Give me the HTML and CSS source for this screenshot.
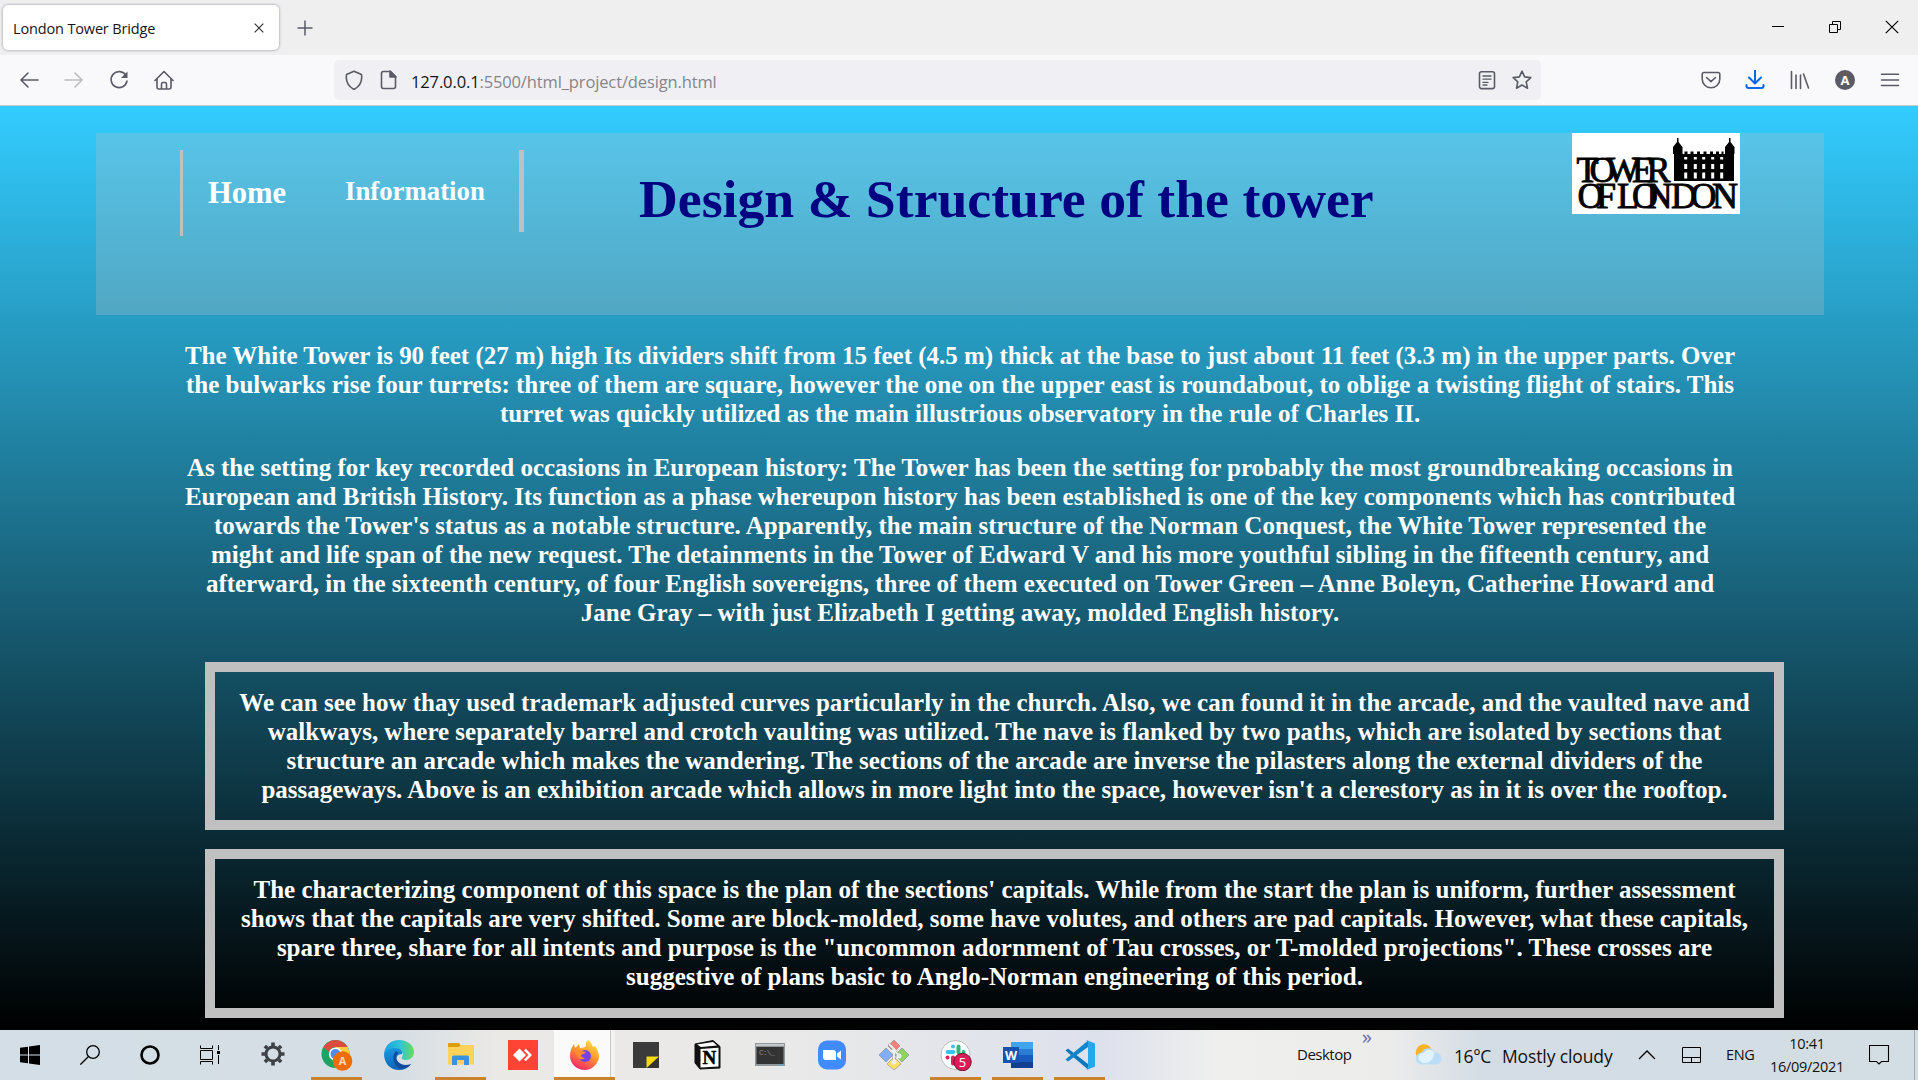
FILE: index.html
```html
<!DOCTYPE html>
<html lang="en">
<head>
<meta charset="utf-8">
<title>London Tower Bridge</title>
<link rel="stylesheet" href="styles.css">
</head>
<body>
<div class="tabbar">
  <div class="tab"><span class="tab-title">London Tower Bridge</span>
    <svg class="tab-close" width="10" height="10" viewBox="0 0 10 10"><path d="M.7.7l8.6 8.6M9.3.7L.7 9.3" stroke="#333" stroke-width="1.2"/></svg>
  </div>
  <svg class="newtab" width="16" height="16" viewBox="0 0 16 16"><path d="M8 .5v15M.5 8h15" stroke="#5b5b66" stroke-width="1.5"/></svg>
  <div class="winctl">
    <svg width="14" height="14" viewBox="0 0 14 14"><path d="M1 6.500h12" stroke="#000"/></svg>
    <svg width="14" height="14" viewBox="0 0 14 14" fill="none" stroke="#000"><path d="M1.500 4.500h8v8h-8zM4.500 4.500v-3h8v8h-3"/></svg>
    <svg width="14" height="14" viewBox="0 0 14 14"><path d="M.8.8l12.400 12.400M13.200.8L.8 13.200" stroke="#000" stroke-width="1.200"/></svg>
  </div>
</div>
<div class="toolbar">
  <div class="navicons">
    <svg viewBox="0 0 20 20"><path d="M19 10H2M9 3L2 10l7 7"/></svg>
    <svg class="dim" viewBox="0 0 20 20"><path d="M1 10h17M11 3l7 7-7 7"/></svg>
    <svg viewBox="0 0 20 20"><path d="M17 5.500A8 8 0 1 0 18 11"/><path d="M18.500 1.500v6.500h-6.500z" fill="#5b5b66" stroke="none"/></svg>
    <svg viewBox="0 0 20 20"><path d="M1 10.500l9-9 9 9M3 9v8q0 2 2 2h10q2 0 2-2V9M7.500 19v-5q0-1.500 1.500-1.500h2q1.500 0 1.500 1.500v5"/></svg>
  </div>
  <div class="urlbar">
    <svg viewBox="0 0 20 20"><path d="M10 1.200L17.500 4.500q1.500 10-7.500 15q-9-5-7.500-15z"/></svg>
    <svg class="page-icon" viewBox="0 0 20 20"><path d="M4.500 1.500h7l5 5v10q0 2-2 2h-10q-2 0-2-2v-13q0-2 2-2z"/><path d="M11 1v6h6z" fill="#5b5b66"/></svg>
    <span class="url"><b>127.0.0.1</b>:5500/html_project/design.html</span>
    <svg class="reader" viewBox="0 0 20 20"><rect x="2.500" y="1.800" width="15" height="16.800" rx="2"/><path d="M6 6h8M6 9.200h8M6 12.400h5M6 15h4" stroke-width="1.300"/></svg>
    <svg viewBox="0 0 20 20"><path d="M10 1.200l2.600 5.700 6.200.7-4.600 4.200 1.300 6.400L10 15l-5.500 3.200 1.300-6.400L1.200 7.600l6.200-.7z"/></svg>
  </div>
  <div class="tools">
    <svg class="pocket" viewBox="0 0 20 20"><path d="M3 2.500h14q1.800 0 1.800 1.800V9a8.800 8.800 0 0 1-17.600 0V4.300Q1.200 2.500 3 2.500zM5.500 7.500l4.500 4.200 4.500-4.200"/></svg>
    <svg class="blue" viewBox="0 0 20 20"><path d="M10 0v13M4 7.500l6 6 6-6M1.500 15v1q0 2 2 2h13q2 0 2-2v-1"/></svg>
    <svg class="library" viewBox="0 0 20 20"><path d="M1.500 1.500v17M6 5v13.500M10.500 5v13.500M13.500 4l5 14"/></svg>
    <span class="account">A</span>
    <svg viewBox="0 0 20 20"><path d="M1.500 4.200h17M1.500 10h17M1.500 15.500h17"/></svg>
  </div>
</div>

<main class="page">
  <header class="banner">
    <nav class="menu"><a class="home">Home</a><a class="info">Information</a></nav>
    <h1>Design &amp; Structure of the tower</h1>
    <svg class="logo" width="168" height="81" viewBox="0 0 168 81">
      <rect width="168" height="81" fill="#fff"/>
      <g font-family="Liberation Serif,serif" font-size="36" font-weight="400" stroke="#000" stroke-width=".9">
        <text y="49" x="4.500 17.500 34 60 74.500">TOWER</text>
        <text y="75" x="5.500 24">OF</text>
        <text y="75" x="45 60 74.500 99 118.500 140">LONDON</text>
      </g>
      <path d="M102 21h60v27h-60zM101 21v-7l4-5V5h1.500v4l4 5v7zM153 21v-7l4-5V5h1.500v4l4 5v7zM112.500 18.500h3v3h-3zM118.500 18.500h3v3h-3zM125 18.500h3v3h-3zM131.500 18.500h3v3h-3zM138 18.500h3v3h-3zM144 18.500h3v3h-3zM149.500 18.500h2v3h-2z"/>
      <path d="M113.700 24v2.500M123.300 24v2.500M131.700 24v2.500M140.700 24v2.500M149.700 24v2.500M113.700 31v5M123.300 31v5M131.700 31v5M140.700 31v5M149.700 31v5M113.700 39.500v6M123.300 39.500v6M131.700 39.500v6M140.700 39.500v6M149.700 39.500v6" stroke="#fff" stroke-width="3"/>
    </svg>
  </header>
  <p class="copy">The White Tower is 90 feet (27 m) high Its dividers shift from 15 feet (4.5 m) thick at the base to just about 11 feet (3.3 m) in the upper parts. Over<br>the bulwarks rise four turrets: three of them are square, however the one on the upper east is roundabout, to oblige a twisting flight of stairs. This<br>turret was quickly utilized as the main illustrious observatory in the rule of Charles II.</p>
  <p class="copy">As the setting for key recorded occasions in European history: The Tower has been the setting for probably the most groundbreaking occasions in<br>European and British History. Its function as a phase whereupon history has been established is one of the key components which has contributed<br>towards the Tower's status as a notable structure. Apparently, the main structure of the Norman Conquest, the White Tower represented the<br>might and life span of the new request. The detainments in the Tower of Edward V and his more youthful sibling in the fifteenth century, and<br>afterward, in the sixteenth century, of four English sovereigns, three of them executed on Tower Green – Anne Boleyn, Catherine Howard and<br>Jane Gray – with just Elizabeth I getting away, molded English history.</p>
  <section class="frame">We can see how thay used trademark adjusted curves particularly in the church. Also, we can found it in the arcade, and the vaulted nave and<br>walkways, where separately barrel and crotch vaulting was utilized. The nave is flanked by two paths, which are isolated by sections that<br>structure an arcade which makes the wandering. The sections of the arcade are inverse the pilasters along the external dividers of the<br>passageways. Above is an exhibition arcade which allows in more light into the space, however isn't a clerestory as in it is over the rooftop.</section>
  <section class="frame second">The characterizing component of this space is the plan of the sections' capitals. While from the start the plan is uniform, further assessment<br>shows that the capitals are very shifted. Some are block-molded, some have volutes, and others are pad capitals. However, what these capitals,<br>spare three, share for all intents and purpose is the "uncommon adornment of Tau crosses, or T-molded projections". These crosses are<br>suggestive of plans basic to Anglo-Norman engineering of this period.</section>
</main>

<footer class="taskbar">
  <div class="cell sys"><svg width="20" height="20" viewBox="0 0 20 20"><path d="M0 2.800l8-1.100V9.500H0zM9 1.500L20 0v9.500H9zM0 10.500h8v7.800l-8-1.100zM9 10.500h11V20L9 18.500z"/></svg></div>
  <div class="cell sys"><svg width="20" height="20" viewBox="0 0 20 20" fill="none" stroke="#000" stroke-width="1.300"><circle cx="13" cy="7" r="6.300"/><path d="M8.500 11.500L.4 19.600"/></svg></div>
  <div class="cell sys"><svg width="20" height="20" viewBox="0 0 20 20"><circle cx="10" cy="10" r="8.500" fill="none" stroke="#000" stroke-width="2.600"/></svg></div>
  <div class="cell sys"><svg width="20" height="20" viewBox="0 0 20 20" fill="none" stroke="#000"><path d="M.5.500v3h12v-3M.5 5.500h12v9H.5zM.5 19.500v-3h12v3M18.500 0v5M18.500 10v9"/><path d="M17 6h3v3h-3z" fill="#000" stroke="none"/></svg></div>
  <div class="cell gear"><svg width="24" height="24" viewBox="-12 -12 24 24" fill="none" stroke="#3d4145"><circle r="7" stroke-width="3"/><g stroke-width="3.600"><path d="M0-8v-3.500M0 8v3.500M-8 0h-3.500M8 0h3.500M5.800-5.800l2.300-2.300M-5.800-5.800l-2.300-2.300M5.800 5.800l2.300 2.300M-5.800 5.800l-2.300 2.300"/></g></svg></div>
  <div class="cell on"><svg viewBox="0 0 32 32"><circle cx="14.500" cy="15" r="14" fill="#1da462"/><path d="M2.400 8A14 14 0 0 1 26.600 8H14.500A7 7 0 0 0 8 13z" fill="#dd4b3e"/><path d="M14.500 8h12.100A14 14 0 0 1 14.500 29l6-10.500z" fill="#ffcd40"/><circle cx="14.500" cy="15" r="6.600" fill="#fff"/><circle cx="14.500" cy="15" r="5" fill="#4a8af4"/><circle cx="21.500" cy="22" r="9.800" fill="#ee6c0a"/><text x="21.500" y="26" text-anchor="middle" font-size="11" font-weight="bold" fill="#ffd9b5">A</text></svg></div>
  <div class="cell"><svg viewBox="0 0 32 32"><defs><linearGradient id="eg" x1="0" x2="1"><stop stop-color="#1d9fe0"/><stop offset=".55" stop-color="#31c5d6"/><stop offset="1" stop-color="#67dc55"/></linearGradient><linearGradient id="eb" y2="1" x2=".3"><stop stop-color="#1a9be3"/><stop offset="1" stop-color="#0a63b5"/></linearGradient></defs><path d="M1 15C2 6 8 1 16 1c9 0 15 6 15 12 0 5-4 8-8 8-3 0-5-1-4-3 2-3 0-7-5-7C8 11 3 13 1 15z" fill="url(#eg)"/><path d="M1 15c2-4 6-6 11-6 5 0 8 3 7 6-5 0-7 4-4 8 3 3 8 5 13 2-3 4-7 6-12 6C7 31 1 24 1 15z" fill="url(#eb)"/><path d="M13 12c-4 4-4 12 3 17 4 2 9 0 12-4-5 2-10 1-13-2-3-4-2-8 1-9z" fill="#134c9c"/></svg></div>
  <div class="cell on"><svg viewBox="0 0 32 32"><path d="M3 5q0-1 1-1h10l2 3-2 2H3z" fill="#df9c0b"/><path d="M3 8h11l2-2h13v19.500H3z" fill="#ffd35a"/><path d="M7 26v-8q0-1.500 1.500-1.500h14q1.500 0 1.500 1.500v8h-5v-5h-7v5z" fill="#3893dc"/></svg></div>
  <div class="cell"><svg viewBox="0 0 32 32"><path d="M1 1h30v30H1z" fill="#ff4335"/><path d="M6 16l6.500-6.500L19 16l-6.500 6.500zM17 11.500l1.800-1.800L25 16l-6.200 6.300-1.800-1.800L21.400 16z" fill="#fff"/></svg></div>
  <div class="cell on active"><svg viewBox="0 0 32 32"><defs><linearGradient id="ff" x1=".8" y1="0" x2=".3" y2="1"><stop stop-color="#ffe64a"/><stop offset=".45" stop-color="#ff9a2c"/><stop offset="1" stop-color="#f5236b"/></linearGradient></defs><path d="M19 1c4 3 4 5 5 7l2-1c4 5 5 11 3 15-3 6-8 9-13 9C7 31 1 24 1 17c0-4 1-8 4-12l1 4c2-2 3-3 4-4l1 4c3 0 5-1 6-2-1-2 0-4 2-6z" fill="url(#ff)"/><circle cx="16" cy="17" r="6" fill="#7543e5"/><path d="M6 12c3-2 7 0 11 1-1 2-4 2-5 3 0 2 2 3 4 3-3 3-8 1-10-7z" fill="#ff8b2f"/></svg></div>
  <div class="cell"><svg viewBox="0 0 32 32"><path d="M3 3h26v14L18 29H3z" fill="#3b3b3c"/><path d="M16 29V17h13v12z" fill="#333"/><path d="M16.500 29V17.500H29z" fill="#ffd90a"/></svg></div>
  <div class="cell"><svg viewBox="0 0 32 32"><path d="M3 5l18-3.500 7 6V29L8 30l-5-6z" fill="#111" stroke="#111"/><path d="M5 5.500L21 3l4 3.500L9 8zM8.500 10l18-1.200v18.700l-18 1z" fill="#fff"/><text x="10.500" y="25" font-family="Liberation Serif" font-weight="bold" font-size="19" stroke="#000" stroke-width=".5">N</text></svg></div>
  <div class="cell"><svg viewBox="0 0 32 32"><path d="M1 4h30v23H1z" fill="#92979b"/><path d="M2.500 8h27v17h-27z" fill="#333334"/><path d="M2 5h28v2H2z" fill="#c5c8ca"/><text x="5" y="16" font-family="Liberation Mono" font-size="8" letter-spacing="-1" fill="#888">C:\_</text><path d="M25 26h4" stroke="#38b5e8"/></svg></div>
  <div class="cell"><svg viewBox="0 0 32 32"><rect x="2" y="1.500" width="28" height="29" rx="9" fill="#428bff"/><path d="M7 11h10q3 0 3 3v7H10q-3 0-3-3zM21 14.500l4-3v9l-4-3z" fill="#fff"/></svg></div>
  <div class="cell"><svg viewBox="0 0 32 32"><g stroke="#858585" stroke-width=".6"><path d="M16 1l6 6-6 6-6-6z" fill="#ff7e78"/><path d="M8 9l7 7-7 7-7-7z" fill="#81aefa"/><path d="M24 9l7 7-7 7-7-7z" fill="#8bd65f"/><path d="M16 18l7 7-7 6-7-6z" fill="#ffdf65"/></g><path d="M11 5l5 5v14M16 12l5 4" fill="none" stroke="#999" stroke-width="3"/><path d="M11 5l5 5v14M16 12l5 4" fill="none" stroke="#eee" stroke-width="2"/><circle cx="16" cy="12" r="2.300" fill="#eee"/><circle cx="16" cy="23" r="2.500" fill="#eee"/><circle cx="21" cy="17" r="2.500" fill="#eee"/></svg></div>
  <div class="cell on"><svg viewBox="0 0 32 32"><circle cx="15.500" cy="16" r="14.500" fill="#fff" stroke="#bbb"/><g fill="none" stroke-width="4" stroke-linecap="round"><path d="M7.500 13h6M13 7.500v.1" stroke="#36c5f0"/><path d="M18.500 7.500v6M23.500 13v.1" stroke="#2eb67d"/><path d="M7.500 18.500v.1M13 18.500v6" stroke="#e01e5a"/><path d="M18.500 18.500h6" stroke="#ecb22e"/></g><circle cx="22.500" cy="23" r="8.700" fill="#df1b57" stroke="#6a1730"/><text x="22.500" y="27.500" text-anchor="middle" font-size="13" fill="#fff">5</text></svg></div>
  <div class="cell on"><svg viewBox="0 0 32 32"><path d="M9 3h22v7H9z" fill="#41a5ee"/><path d="M9 10h22v6H9z" fill="#2b7cd3"/><path d="M9 16h22v7H9z" fill="#185abd"/><path d="M9 23h22v6H9z" fill="#103f91"/><path d="M1 8h16v16H1z" fill="#1853b1"/><text x="9" y="20.500" text-anchor="middle" font-size="12.500" font-weight="bold" fill="#fff">W</text></svg></div>
  <div class="cell on"><svg viewBox="0 0 32 32"><path d="M1.500 11.500L4 9.500l20 15.500v5.500z" fill="#0b78bd"/><path d="M1.500 20.500L4 22.500 24 8V1.500z" fill="#1286ca"/><path d="M22.500 1L31 4.500v23L22.500 31l1.500-3V4z" fill="#25a6ef"/></svg></div>
  <div class="tray">
    <span class="desk">Desktop</span><span class="more">»</span>
    <svg class="weather" width="27" height="21" viewBox="0 0 27 21"><circle cx="9" cy="8.500" r="8.300" fill="#f8b225"/><path d="M7 20.500a6 6 0 0 1-.5-12A7.500 7.500 0 0 1 20 8.500a6 6 0 0 1 1 12z" fill="#b9ddf6"/><path d="M8 19a10 10 0 0 0 11-11 6 6 0 0 0-10 1 5 5 0 0 0-5 7z" fill="#e2f3fe"/></svg>
    <span class="temp">16°C</span><span class="sky">Mostly cloudy</span>
    <svg class="chev" width="18" height="10" viewBox="0 0 18 10"><path d="M1 9l8-8 8 8" fill="none" stroke="#000" stroke-width="1.300"/></svg>
    <svg class="pad" width="20" height="17" viewBox="0 0 20 17"><path d="M.5.500h18v15H.5zM.5 10.500h18M9.500 10.500v5" fill="none" stroke="#000"/></svg>
    <span class="lang">ENG</span>
    <span class="clock"><span class="time">10:41</span><span class="date">16/09/2021</span></span>
    <svg class="note" width="21" height="21" viewBox="0 0 21 21"><path d="M.5.500h19v16h-7l-2.500 2.500-2.500-2.500h-7z" fill="none" stroke="#000" stroke-width="1.100"/></svg>
  </div>
</footer>
</body>
</html>
```
FILE: styles.css
```css
* { box-sizing: border-box; }
body { margin: 0; width: 1918px; height: 1080px; overflow: hidden; display: flex; flex-direction: column; font-family: "Open Sans", sans-serif; }
svg { display: block; flex: none; }
span { white-space: nowrap; }

.tabbar { height: 55px; background: #efefef; display: flex; padding-left: 3px; }
.tab { width: 276px; height: 45px; margin-top: 5px; padding: 0 15px 0 10px; background: #fff; border-radius: 5px; box-shadow: 0 0 3px #8d8c9c; display: flex; align-items: center; justify-content: space-between; }
.tab-title { font-size: 14.5px; color: #15141a; letter-spacing: -.15px; padding-top: 2px; }
.newtab { margin: 20px 0 0 18px; }
.winctl { display: flex; gap: 43px; margin: 20px 19px 0 auto; }

.toolbar { height: 51px; background: #f9f9fb; border-bottom: 1px solid #c8c8cc; display: flex; align-items: center; }
.toolbar svg { width: 20px; height: 20px; fill: none; stroke: #5b5b66; stroke-width: 1.6; stroke-linejoin: round; stroke-linecap: round; }
.toolbar .dim { stroke: #bcbcc2; }
.toolbar .blue { stroke: #0a66e4; stroke-width: 2; }
.navicons { display: flex; gap: 25px; padding-left: 19px; width: 334px; }
.urlbar { width: 1207px; height: 40px; background: #f0f0f4; border-radius: 5px; display: flex; align-items: center; padding: 0 9px 0 10px; }
.page-icon { margin-left: 15px; }
.url { flex: 1; margin-left: 12px; padding-top: 2px; font-size: 16.5px; color: #85848c; letter-spacing: -.13px; }
.url b { font-weight: 400; color: #15141a; }
.reader { margin-right: 15px; }
.tools { display: flex; margin: 0 18px 0 auto; gap: 25px; align-items: center; }
.pocket { margin-right: -1px; }
.account { width: 20px; height: 20px; border-radius: 50%; background: #5b5b66; color: #fff; font: bold 13px/20px "Open Sans", sans-serif; text-align: center; }

.page { height: 924px; background: linear-gradient(#3cf, #000); padding-top: 27px; font-family: "Liberation Serif", serif; font-weight: bold; font-size: 25px; line-height: 29px; letter-spacing: -.009px; color: #fff; text-align: center; white-space: nowrap; }
.banner { width: 1728px; height: 182px; margin: 0 0 26px 96px; background: rgba(192, 192, 192, .27); display: flex; align-items: flex-start; padding-left: 84px; }
.menu { display: flex; align-items: flex-start; margin-top: 17px; width: 344px; }
.menu a { display: block; text-align: left; }
.home { width: 137px; height: 86px; border-left: 3px solid silver; padding: 27px 0 0 25px; font-size: 30.6px; line-height: 32px; }
.info { width: 207px; height: 82px; border-right: 5px solid silver; padding: 26px 0 0 28px; font-size: 26.8px; line-height: 30px; }
h1 { margin: 34px 0 0 115px; font-size: 53.75px; line-height: 64px; color: navy; width: 739px; text-align: left; }
.logo { margin-left: 194px; }
.copy { margin: 0 0 25px 2px; }
.frame { width: 1579px; height: 168px; margin: 35px 0 0 205px; border: 10px solid silver; padding: 16px 0 0; }
.second { height: 169px; margin-top: 19px; }

.taskbar { height: 50px; display: flex; color: #111; background: linear-gradient(90deg, #d3dee6 0, #d6dee4 400px, #ebe9e6 500px, #e9e9e9 800px, #dde1ec 1100px, #efefee 1220px, #ececeb 1390px, #d4dde5 1480px, #d3dde4 100%); }
.cell { width: 61.9px; flex: none; display: flex; flex-direction: column; align-items: center; padding-top: 9px; position: relative; }
.cell svg { font-family: "Open Sans", sans-serif; }
.cell:not(.sys):not(.gear) svg { width: 32px; height: 32px; }
.sys { width: 60px; padding-top: 15px; }
.gear { width: 66px; padding-top: 12px; }
.on::after { content: ""; width: 51px; height: 3px; background: #cb822c; margin-top: auto; }
.active { background: linear-gradient(90deg, #fafafa 56px, #c9c9c9 56px, #c9c9c9 57px, #f2f2f1 57px); }
.active::after { width: 61px; }
.tray { margin-left: auto; width: 621px; padding-right: 3px; display: flex; align-items: flex-start; box-shadow: inset -3px 0 #d3dde4, inset -4px 0 #9fa9b2; }
.desk { width: 65px; font-size: 15px; line-height: 20px; margin-top: 14px; letter-spacing: -.5px; }
.more { width: 53px; font-size: 20px; line-height: 14px; color: #6868aa; }
.weather { margin-top: 14px; }
.temp { width: 48px; margin: 14px 0 0 12px; font-size: 17.5px; line-height: 24px; letter-spacing: -.4px; }
.sky { width: 136px; margin-top: 14px; font-size: 17.5px; line-height: 24px; letter-spacing: -.12px; }
.chev { margin-top: 20px; }
.pad { margin: 17px 0 0 26px; }
.lang { width: 42px; margin: 15px 0 0 24px; font-size: 14.5px; line-height: 20px; letter-spacing: -.4px; }
.clock { width: 78px; display: flex; flex-direction: column; align-items: center; font-size: 14.5px; line-height: 23px; padding-top: 2px; letter-spacing: -.3px; }
.note { margin: 15px 0 0 23px; }
```
